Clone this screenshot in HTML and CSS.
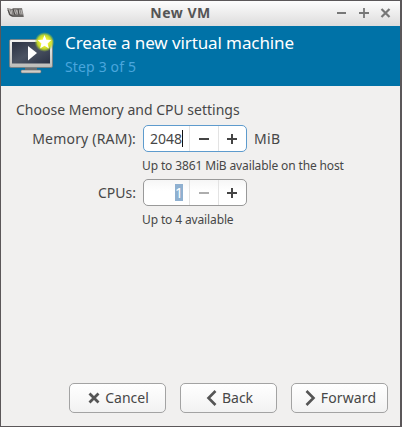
FILE: index.html
```
<!DOCTYPE html>
<html lang="en">
<head>
<meta charset="utf-8">
<title>New VM</title>
<link rel="stylesheet" href="styles.css">
</head>
<body>
<div class="window">
  <div class="titlebar">
    <svg class="app-icon" width="18" height="11" viewBox="0 0 18 11">
      <path d="M0 1l5 1 1-1h9l2 9H5L2 8z" fill="#858280"/>
      <path d="M2 2l2 5 1-4M7 3l1 4 2-4 1 4M12 3l1 4M14 3l1 4" fill="none" stroke="#c6c3c0" stroke-width=".8"/>
      <path d="M1 3l2 5 3 1h10M6 2l2 6M11 2l1 6" fill="none" stroke="#4b4846"/>
    </svg>
    <span class="title">New VM</span>
    <svg class="controls" width="56" height="12" viewBox="0 0 56 12">
      <path d="M1 6h9M23 6h10M28 1v10" fill="none" stroke="#777" stroke-width="1.8"/>
      <path d="M45.500 2l8 8M53.500 2l-8 8" fill="none" stroke="#777" stroke-width="2.200"/>
    </svg>
  </div>
  <div class="banner">
    <svg class="vm-icon" width="48" height="44" viewBox="0 0 48 44">
      <defs>
        <linearGradient id="screen" x1="0" y1="0" x2="1" y2="1">
          <stop offset="0" stop-color="#2a3142"/><stop offset=".5" stop-color="#4b5362"/><stop offset="1" stop-color="#2b3346"/>
        </linearGradient>
        <linearGradient id="frame" x1="0" y1="0" x2="0" y2="1">
          <stop offset="0" stop-color="#f4f4f2"/><stop offset="1" stop-color="#bcbcb8"/>
        </linearGradient>
        <radialGradient id="glow">
          <stop offset=".4" stop-color="#f2f430"/><stop offset=".72" stop-color="#c9dc24" stop-opacity=".9"/><stop offset="1" stop-color="#8fbd40" stop-opacity="0"/>
        </radialGradient>
      </defs>
      <path d="M17 35h12v4H17z" fill="#6a6f73"/>
      <rect x="13" y="38" width="20" height="3" rx="1" fill="#d0cdc8" stroke="#6f6f6f" stroke-width=".6"/>
      <rect x="1.500" y="7.500" width="43" height="28" rx="1.500" fill="url(#frame)" stroke="#777c7e" stroke-width=".8"/>
      <rect x="4" y="10" width="38" height="21.500" fill="url(#screen)"/>
      <path d="M20 14l9 7-9 7.500z" fill="#fff"/>
      <circle cx="36.500" cy="10" r="10" fill="url(#glow)"/>
      <path d="M36.500 3l1.900 4.700 5 .4-3.800 3.300 1.300 5-4.400-2.700-4.400 2.700 1.300-5-3.800-3.300 5-.4z" fill="#fff"/>
    </svg>
    <div class="banner-text">
      <div class="heading">Create a new virtual machine</div>
      <div class="step">Step 3 of 5</div>
    </div>
  </div>
  <div class="content">
    <div class="prompt">Choose Memory and CPU settings</div>
    <div class="form">
      <label class="label memory">Memory (RAM):</label>
      <div class="field">
        <div class="spin focused">
          <div class="entry">2048<i class="caret"></i></div>
          <div class="step-button"><svg width="12" height="12"><path d="M1 6h10" stroke="#444" stroke-width="2"/></svg></div>
          <div class="step-button"><svg width="12" height="12"><path d="M1 6h10M6 1v10" stroke="#444" stroke-width="2"/></svg></div>
        </div>
        <span class="unit">MiB</span>
      </div>
      <div class="hint">Up to 3861 MiB available on the host</div>
      <label class="label cpus">CPUs:</label>
      <div class="field">
        <div class="spin">
          <div class="entry"><span class="selected">1</span></div>
          <div class="step-button"><svg width="12" height="12"><path d="M1 6h10" stroke="#999" stroke-width="1.600"/></svg></div>
          <div class="step-button"><svg width="12" height="12"><path d="M1 6h10M6 1v10" stroke="#444" stroke-width="2"/></svg></div>
        </div>
      </div>
      <div class="hint">Up to 4 available</div>
    </div>
    <div class="actions">
      <button class="button"><svg width="12" height="12"><path d="M1.500 1.500l9 9M10.500 1.500l-9 9" stroke="#555" stroke-width="2.800"/></svg><span>Cancel</span></button>
      <button class="button"><svg width="11" height="16"><path d="M9.500 1l-7 7 7 7" fill="none" stroke="#555" stroke-width="2.600"/></svg><span>Back</span></button>
      <button class="button"><svg width="11" height="16"><path d="M1.500 1l7 7-7 7" fill="none" stroke="#555" stroke-width="2.600"/></svg><span class="forward">Forward</span></button>
    </div>
  </div>
</div>
</body>
</html>
```
FILE: styles.css
```
* { box-sizing: border-box; }
body { margin: 0; font: 14px/20px "Noto Sans", sans-serif; color: #474747; }
svg { display: block; flex: none; }
.window {
  width: 402px; height: 427px; display: flex; flex-direction: column;
  border: 1px solid #5b5759; border-right-width: 2px; background: #f1f0ef;
}
.titlebar {
  height: 25px; flex: none; display: grid; grid-template-columns: 50px 1fr 88px;
  align-items: center; padding: 0 8px 2px 6px;
  background: linear-gradient(#fdfdfd, #dddcdc);
}
.title { text-align: center; font-weight: 700; font-size: 14px; letter-spacing: 0.5px; color: #555; white-space: nowrap; }
.controls { justify-self: end; }
.banner { height: 60px; flex: none; display: flex; background: #0072a7; padding: 6px 0 0 7px; }
.banner-text { padding-left: 9px; white-space: nowrap; }
.heading { font-size: 17px; line-height: 22px; color: #fff; letter-spacing: -0.1px; }
.step { font-size: 14px; line-height: 20px; margin-top: 3px; color: #4aa6dd; letter-spacing: 0.15px; }
.content { flex: 1; display: flex; flex-direction: column; padding: 14px 12px 13px 15px; }
.prompt { height: 25px; white-space: nowrap; }
.form { display: grid; grid-template-columns: 120px 1fr; grid-template-rows: 27px 27px 27px 27px; column-gap: 7px; }
.label { text-align: right; line-height: 27px; white-space: nowrap; }
.memory { letter-spacing: 0.2px; }
.field { display: flex; align-items: center; gap: 7px; }
.spin {
  width: 104px; height: 27px; display: grid; grid-template-columns: 45px 29px 1fr;
  border: 1px solid #999; border-radius: 5px; background: linear-gradient(#f6f6f6, #fff 45%);
}
.focused { border-color: #5e9bcd; background: #fff; }
.entry { display: flex; justify-content: flex-end; align-items: center; padding-right: 6px; }
.caret { width: 1px; height: 17px; background: #111; }
.selected { background: #8fb0d0; color: #fff; line-height: 17px; }
.step-button { display: flex; align-items: center; justify-content: center; padding-right: 1px; border-left: 1px solid #e3e3e3; }
.unit { letter-spacing: 0.3px; }
.hint { grid-column: 2; font-size: 12px; line-height: 27px; white-space: nowrap; letter-spacing: -0.13px; margin-left: -1px; }
.actions { margin-top: auto; display: flex; justify-content: flex-end; gap: 14px; }
.button {
  width: 97px; height: 30px; display: flex; justify-content: center; align-items: center; gap: 5px; padding: 0 0 0 2px;
  border: 1px solid #a3a3a3; border-radius: 5px; background: linear-gradient(#fff, #f2f2f2);
  font: inherit; color: inherit;
}
.forward { letter-spacing: 0.15px; }
```
